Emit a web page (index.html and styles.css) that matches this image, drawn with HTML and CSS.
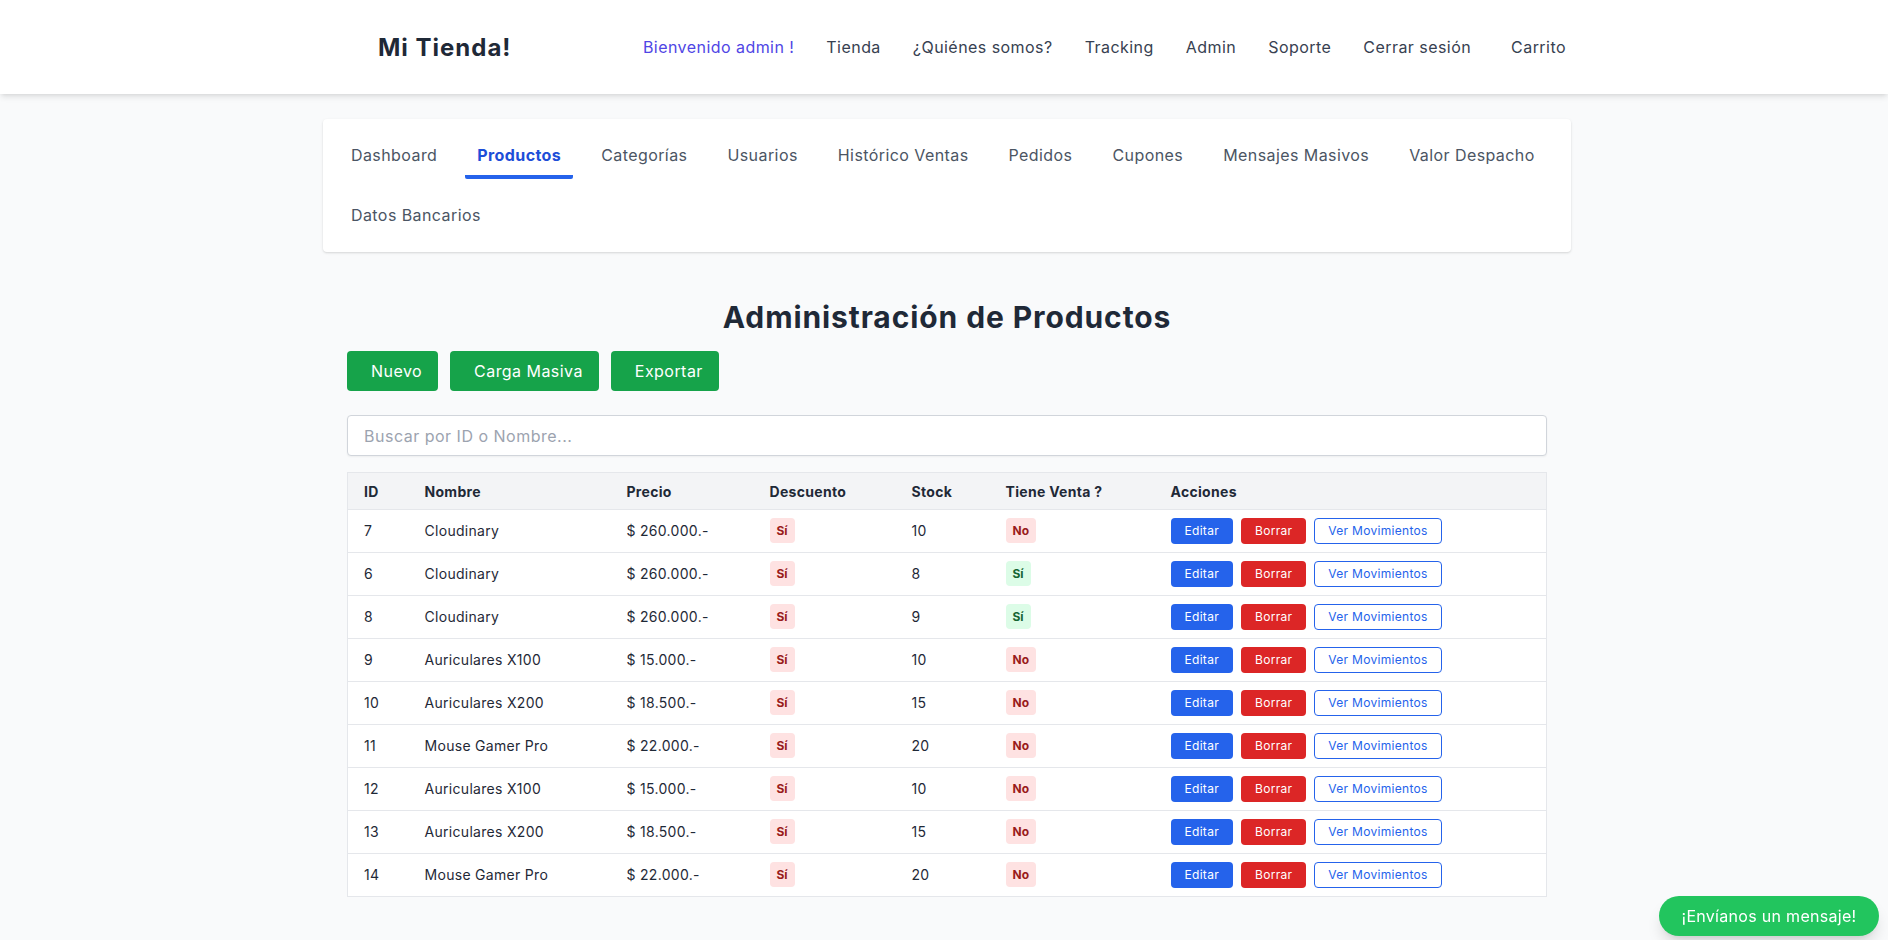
FILE: index.html
```html
<!DOCTYPE html>
<html lang="es">
<head>
<meta charset="utf-8">
<title>Mi Tienda! - Administración de Productos</title>
<link rel="stylesheet" href="styles.css">
</head>
<body>
<header class="topbar">
  <div class="topbar-inner">
    <div class="brand">Mi Tienda!</div>
    <nav class="mainnav">
      <a class="nav-link welcome" href="#">Bienvenido admin !</a>
      <a class="nav-link" href="#">Tienda</a>
      <a class="nav-link" href="#">¿Quiénes somos?</a>
      <a class="nav-link" href="#">Tracking</a>
      <a class="nav-link" href="#">Admin</a>
      <a class="nav-link" href="#">Soporte</a>
      <a class="nav-link" href="#">Cerrar sesión</a>
      <a class="nav-link cart" href="#">Carrito</a>
    </nav>
  </div>
</header>

<main class="page">
  <div class="tabs-card">
    <a class="tab" href="#">Dashboard</a>
    <a class="tab active" href="#">Productos</a>
    <a class="tab" href="#">Categorías</a>
    <a class="tab" href="#">Usuarios</a>
    <a class="tab" href="#">Histórico Ventas</a>
    <a class="tab" href="#">Pedidos</a>
    <a class="tab" href="#">Cupones</a>
    <a class="tab" href="#">Mensajes Masivos</a>
    <a class="tab" href="#">Valor Despacho</a>
    <a class="tab" href="#">Datos Bancarios</a>
  </div>

  <section class="panel">
    <h1 class="title">Administración de Productos</h1>
    <div class="toolbar">
      <button class="btn-green">Nuevo</button>
      <button class="btn-green">Carga Masiva</button>
      <button class="btn-green">Exportar</button>
    </div>
    <input class="search" type="text" placeholder="Buscar por ID o Nombre...">

    <table class="products">
      <colgroup>
        <col class="c-id"><col class="c-name"><col class="c-price"><col class="c-disc"><col class="c-stock"><col class="c-sale"><col class="c-act">
      </colgroup>
      <thead>
        <tr><th>ID</th><th>Nombre</th><th>Precio</th><th>Descuento</th><th>Stock</th><th>Tiene Venta ?</th><th>Acciones</th></tr>
      </thead>
      <tbody>
        <tr><td>7</td><td>Cloudinary</td><td>$ 260.000.-</td><td><span class="badge red">Sí</span></td><td>10</td><td><span class="badge red">No</span></td><td class="actions"><button class="btn-sm edit">Editar</button><button class="btn-sm del">Borrar</button><button class="btn-sm mov">Ver Movimientos</button></td></tr>
        <tr><td>6</td><td>Cloudinary</td><td>$ 260.000.-</td><td><span class="badge red">Sí</span></td><td>8</td><td><span class="badge green">Sí</span></td><td class="actions"><button class="btn-sm edit">Editar</button><button class="btn-sm del">Borrar</button><button class="btn-sm mov">Ver Movimientos</button></td></tr>
        <tr><td>8</td><td>Cloudinary</td><td>$ 260.000.-</td><td><span class="badge red">Sí</span></td><td>9</td><td><span class="badge green">Sí</span></td><td class="actions"><button class="btn-sm edit">Editar</button><button class="btn-sm del">Borrar</button><button class="btn-sm mov">Ver Movimientos</button></td></tr>
        <tr><td>9</td><td>Auriculares X100</td><td>$ 15.000.-</td><td><span class="badge red">Sí</span></td><td>10</td><td><span class="badge red">No</span></td><td class="actions"><button class="btn-sm edit">Editar</button><button class="btn-sm del">Borrar</button><button class="btn-sm mov">Ver Movimientos</button></td></tr>
        <tr><td>10</td><td>Auriculares X200</td><td>$ 18.500.-</td><td><span class="badge red">Sí</span></td><td>15</td><td><span class="badge red">No</span></td><td class="actions"><button class="btn-sm edit">Editar</button><button class="btn-sm del">Borrar</button><button class="btn-sm mov">Ver Movimientos</button></td></tr>
        <tr><td>11</td><td>Mouse Gamer Pro</td><td>$ 22.000.-</td><td><span class="badge red">Sí</span></td><td>20</td><td><span class="badge red">No</span></td><td class="actions"><button class="btn-sm edit">Editar</button><button class="btn-sm del">Borrar</button><button class="btn-sm mov">Ver Movimientos</button></td></tr>
        <tr><td>12</td><td>Auriculares X100</td><td>$ 15.000.-</td><td><span class="badge red">Sí</span></td><td>10</td><td><span class="badge red">No</span></td><td class="actions"><button class="btn-sm edit">Editar</button><button class="btn-sm del">Borrar</button><button class="btn-sm mov">Ver Movimientos</button></td></tr>
        <tr><td>13</td><td>Auriculares X200</td><td>$ 18.500.-</td><td><span class="badge red">Sí</span></td><td>15</td><td><span class="badge red">No</span></td><td class="actions"><button class="btn-sm edit">Editar</button><button class="btn-sm del">Borrar</button><button class="btn-sm mov">Ver Movimientos</button></td></tr>
        <tr><td>14</td><td>Mouse Gamer Pro</td><td>$ 22.000.-</td><td><span class="badge red">Sí</span></td><td>20</td><td><span class="badge red">No</span></td><td class="actions"><button class="btn-sm edit">Editar</button><button class="btn-sm del">Borrar</button><button class="btn-sm mov">Ver Movimientos</button></td></tr>
      </tbody>
    </table>
  </section>
</main>

<button class="chat-btn">¡Envíanos un mensaje!</button>
</body>
</html>
```

FILE: styles.css
```css
* { box-sizing: border-box; }

html, body {
  margin: 0;
  padding: 0;
}

body {
  background: #f9fafb;
  font-family: "Inter", "Noto Sans", sans-serif;
  color: #1f2937;
  letter-spacing: 0.5px;
}

a { text-decoration: none; }

/* ---------- top bar ---------- */
.topbar {
  background: #ffffff;
  height: 94px;
  box-shadow: 0 4px 6px -1px rgba(0,0,0,0.10), 0 2px 4px -2px rgba(0,0,0,0.08);
  position: relative;
  z-index: 2;
}

.topbar-inner {
  height: 100%;
  display: flex;
  align-items: center;
  justify-content: space-between;
  padding-left: 378px;
  padding-right: 322px;
}

.brand {
  font-size: 24px;
  font-weight: 700;
  color: #1f2937;
  letter-spacing: 1px;
}

.mainnav {
  display: flex;
  align-items: center;
  gap: 32px;
}

.nav-link {
  font-size: 16px;
  line-height: 24px;
  color: #374151;
  letter-spacing: 0.45px;
}

.nav-link.welcome { color: #4f46e5; }
.nav-link.cart { margin-left: 8px; }

/* ---------- page ---------- */
.page {
  width: 1248px;
  margin: 25px 0 0 calc(50% - 621px);
}

.tabs-card {
  background: #ffffff;
  border-radius: 4px;
  box-shadow: 0 1px 3px rgba(0,0,0,0.10), 0 1px 2px rgba(0,0,0,0.06);
  padding: 16px 16px 13px;
  display: flex;
  flex-wrap: wrap;
  column-gap: 16px;
  row-gap: 16px;
}

.tab {
  display: block;
  padding: 8px 12px 8px;
  border-bottom: 4px solid transparent;
  font-size: 16px;
  line-height: 24px;
  color: #4b5563;
  letter-spacing: 0.42px;
}

.tab.active {
  color: #1d4ed8;
  font-weight: 700;
  border-bottom-color: #2563eb;
  border-radius: 2px;
  letter-spacing: 0.4px;
}

.panel {
  padding: 47px 24px 0;
}

.title {
  margin: 0;
  text-align: center;
  font-size: 30px;
  line-height: 36px;
  font-weight: 700;
  color: #1f2937;
  letter-spacing: 0.9px;
}

.toolbar {
  display: flex;
  gap: 12px;
  margin-top: 16px;
}

.btn-green {
  height: 40px;
  padding: 0 16px 0 24px;
  border: none;
  border-radius: 4px;
  background: #16a34a;
  color: #ffffff;
  font-family: inherit;
  font-size: 16px;
  letter-spacing: 0.45px;
}

.search {
  display: block;
  width: 100%;
  height: 41px;
  margin-top: 24px;
  padding: 0 16px;
  border: 1px solid #d1d5db;
  border-radius: 4px;
  background: #ffffff;
  box-shadow: 0 1px 2px rgba(0,0,0,0.05);
  font-family: inherit;
  font-size: 16px;
  letter-spacing: 0.5px;
  color: #111827;
}

.search::placeholder { color: #9ca3af; }

/* ---------- table ---------- */
.products {
  width: 100%;
  margin-top: 16px;
  border-collapse: collapse;
  table-layout: fixed;
  background: #ffffff;
  border: 1px solid #e5e7eb;
}

.c-id { width: 61px; }
.c-name { width: 202px; }
.c-price { width: 143px; }
.c-disc { width: 142px; }
.c-stock { width: 94px; }
.c-sale { width: 165px; }

.products thead tr { background: #f3f4f6; }

.products th {
  text-align: left;
  padding: 10px 16px 9px;
  font-size: 14px;
  line-height: 17px;
  font-weight: 700;
  color: #1f2937;
  letter-spacing: 0.3px;
  border-bottom: 1px solid #e5e7eb;
}

.products td {
  padding: 8px 16px;
  font-size: 14px;
  line-height: 26px;
  color: #1f2937;
  letter-spacing: 0.3px;
  border-bottom: 1px solid #e5e7eb;
  white-space: nowrap;
  vertical-align: middle;
}

.badge {
  display: inline-block;
  padding: 4px 7px;
  border-radius: 4px;
  font-size: 12px;
  line-height: 17px;
  font-weight: 700;
  letter-spacing: 0;
  vertical-align: top;
}

.badge.red { background: #fee2e2; color: #991b1b; }
.badge.green { background: #dcfce7; color: #166534; }

.actions {
  font-size: 0;
}

.btn-sm {
  height: 26px;
  margin-right: 8px;
  border-radius: 4px;
  font-family: inherit;
  font-size: 12px;
  line-height: 16px;
  letter-spacing: 0.3px;
  vertical-align: top;
  border: none;
}

.btn-sm.edit { background: #2563eb; color: #ffffff; padding: 0 14px; }
.btn-sm.del { background: #dc2626; color: #ffffff; padding: 0 14px; }
.btn-sm.mov {
  background: #ffffff;
  color: #2563eb;
  border: 1px solid #2563eb;
  padding: 0 13px;
}

/* ---------- floating chat ---------- */
.chat-btn {
  position: fixed;
  right: 9px;
  bottom: 4px;
  width: 220px;
  height: 40px;
  border: none;
  border-radius: 9999px;
  background: #22c55e;
  color: #ffffff;
  font-family: inherit;
  font-size: 16px;
  letter-spacing: 0.3px;
  box-shadow: 0 10px 15px -3px rgba(0,0,0,0.15), 0 4px 6px -4px rgba(0,0,0,0.1);
}
```
